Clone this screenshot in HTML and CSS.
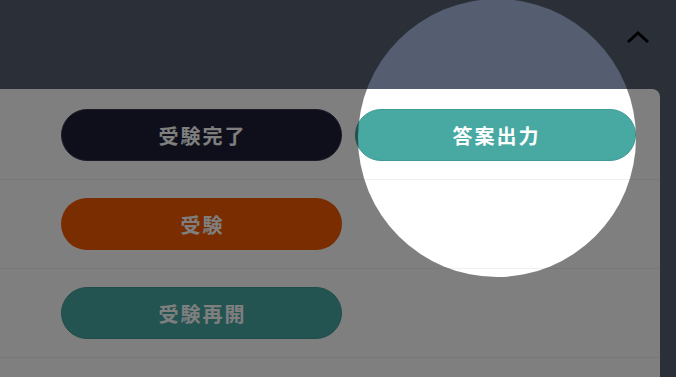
FILE: index.html
```html
<!DOCTYPE html>
<html lang="ja">
<head>
  <meta charset="UTF-8" />
  <meta name="viewport" content="width=device-width, initial-scale=1" />
  <title>受験一覧</title>
  <link rel="stylesheet" href="styles.css">
</head>
<body>

  <!-- ヘッダー -->
  <header class="topbar">
    <button class="toggle" aria-label="閉じる">
      <svg width="24" height="14" viewBox="0 0 24 14">
        <polyline points="2,12 12,3 22,12" fill="none" stroke="#000" stroke-width="3" />
      </svg>
    </button>
  </header>

  <!-- 一覧 -->
  <main class="panel">
    <div class="row">
      <button class="btn btn-dark">受験完了</button>
      <button class="btn btn-teal">答案出力</button>
    </div>
    <div class="row">
      <button class="btn btn-orange">受験</button>
    </div>
    <div class="row">
      <button class="btn btn-teal">受験再開</button>
    </div>
  </main>

  <!-- チュートリアルのスポットライト -->
  <div class="spotlight"></div>

</body>
</html>
```

FILE: styles.css
```css
* {
  box-sizing: border-box;
}

html, body {
  margin: 0;
  padding: 0;
  width: 100%;
  height: 100%;
  overflow: hidden;
}

body {
  background: #555e71;
  font-family: "Noto Sans CJK JP", "Noto Sans", sans-serif;
  position: relative;
}

/* ヘッダー */
.topbar {
  height: 89px;
  display: flex;
  justify-content: flex-end;
  align-items: flex-start;
  padding: 30px 26px 0 0;
}

.toggle {
  background: none;
  border: none;
  padding: 0;
  width: 24px;
  height: 14px;
  cursor: pointer;
}

.toggle svg {
  display: block;
}

/* パネル */
.panel {
  background: #fff;
  margin-right: 16px;
  border-top-right-radius: 8px;
  padding-top: 2px;
  height: calc(100% - 89px);
}

.row {
  height: 89px;
  display: flex;
  align-items: center;
  gap: 13px;
  padding-left: 61px;
  border-bottom: 1px solid #f0f0f0;
}

.btn {
  width: 281px;
  height: 52px;
  border-radius: 26px;
  border: 1px solid transparent;
  color: #fff;
  font-family: inherit;
  font-size: 20px;
  font-weight: bold;
  letter-spacing: 2px;
  text-indent: 2px;
  cursor: pointer;
}

.btn-dark {
  background: #1d1f37;
  border-color: #34364c;
}

.btn-teal {
  background: #48a9a3;
  border-color: #3e9a94;
}

.btn-orange {
  background: #f45a00;
}

/* スポットライト */
.spotlight {
  position: absolute;
  left: 358px;
  top: -1px;
  width: 278px;
  height: 278px;
  border-radius: 50%;
  box-shadow: 0 0 0 2000px rgba(0, 0, 0, 0.5);
  pointer-events: none;
}
```
